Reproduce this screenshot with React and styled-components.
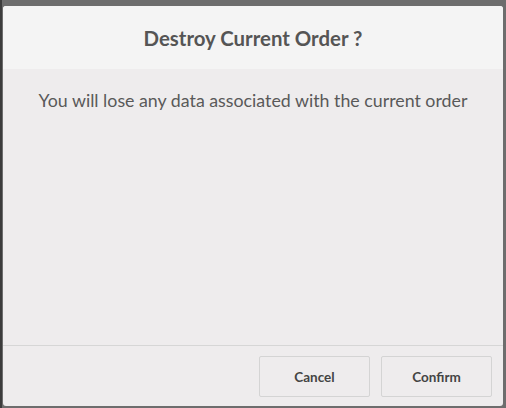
import styled, { createGlobalStyle } from "styled-components";

const GlobalStyle = createGlobalStyle`
  html, body {
    margin: 0;
    padding: 0;
    background: #6d6d6d;
    font-family: Lato, "Open Sans", sans-serif;
  }
`;

function App() {
  return (
    <>
      <GlobalStyle />
      <Backdrop>
        <Dialog>
          <Header>
            <Title>Destroy Current Order ?</Title>
          </Header>
          <Body>
            <Message>You will lose any data associated with the current order</Message>
          </Body>
          <Footer>
            <Button>Cancel</Button>
            <Button>Confirm</Button>
          </Footer>
        </Dialog>
      </Backdrop>
    </>
  );
}

export default App;

const Backdrop = styled.div`
  width: 506px;
  height: 408px;
  box-sizing: border-box;
  padding: 6px 3px 2px 3px;
  background: linear-gradient(to right, #3c3c3c 0, #3c3c3c 2px, #6d6d6d 2px);
`;

const Dialog = styled.div`
  width: 500px;
  height: 400px;
  display: flex;
  flex-direction: column;
  background: #eeeced;
  border-radius: 3px;
  overflow: hidden;
`;

const Header = styled.div`
  height: 63px;
  display: flex;
  align-items: center;
  justify-content: center;
  background: #f4f4f4;
`;

const Title = styled.h2`
  margin: 0;
  font-size: 20.4px;
  font-weight: 700;
  color: #555555;
`;

const Body = styled.div`
  flex: 1;
  padding-top: 20px;
  text-align: center;
`;

const Message = styled.p`
  margin: 0;
  font-size: 17.8px;
  color: #595959;
`;

const Footer = styled.div`
  height: 61px;
  box-sizing: border-box;
  border-top: 1px solid #d6d6d6;
  display: flex;
  justify-content: flex-end;
  align-items: flex-start;
  gap: 11px;
  padding: 10px 11px 0 0;
`;

const Button = styled.button`
  width: 111px;
  height: 41px;
  background: #eeeced;
  border: 1px solid #d4d4d4;
  border-radius: 2px;
  font-family: Lato, sans-serif;
  font-size: 13.5px;
  font-weight: 700;
  color: #444444;
  cursor: pointer;
`;
